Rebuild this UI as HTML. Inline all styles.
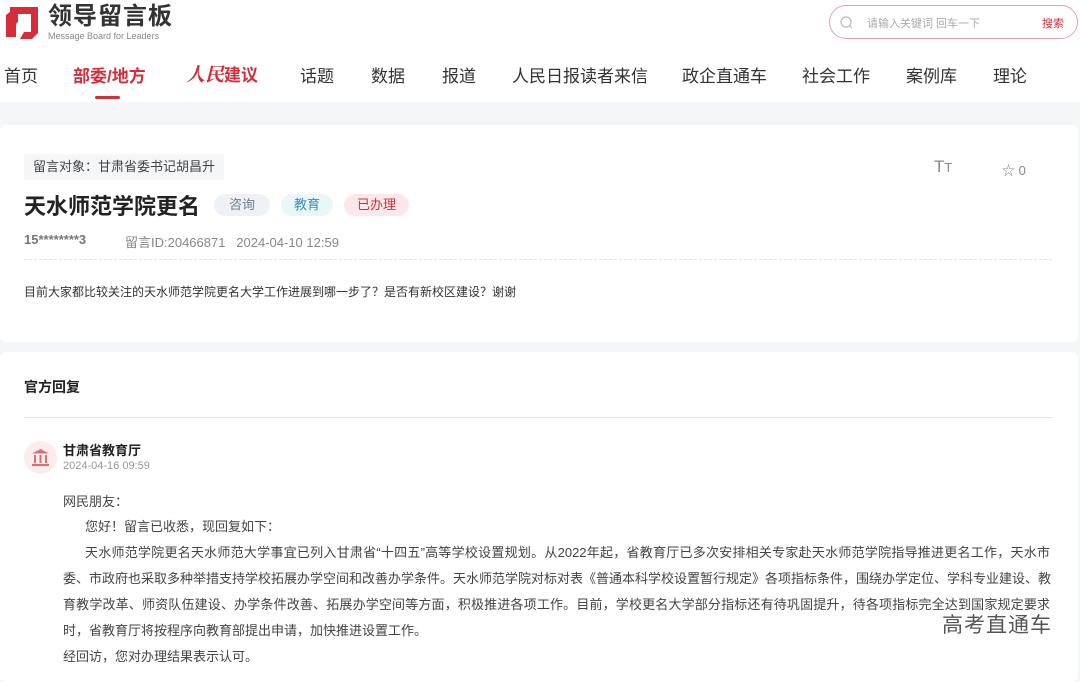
<!DOCTYPE html>
<html><head><meta charset="utf-8">
<style>
*{margin:0;padding:0;box-sizing:border-box}
body{width:1080px;height:665px;overflow:hidden;background:#f5f6f7;font-family:"Liberation Sans","Noto Sans CJK SC",sans-serif;color:#333;position:relative}
.hdr{position:absolute;left:0;top:0;width:1080px;height:102px;background:#fff}
.logo{position:absolute;left:4px;top:5px}
.search{position:absolute;left:829px;top:5px;width:249px;height:34px;border:1px solid #eaa0ad;border-radius:17px}
.nav{position:absolute;top:65px;font-size:17px;color:#333;white-space:nowrap;line-height:24px}
.abs{position:absolute;white-space:nowrap}
.card{position:absolute;background:#fff;border-radius:6px}
.tag{position:absolute;height:22px;line-height:22px;border-radius:11px;font-size:13px;text-align:center}
.ln{position:absolute;left:63px;width:987px;font-size:13px;color:#444;text-align:justify;text-align-last:justify;white-space:nowrap;line-height:20px}
</style></head><body>
<div class="hdr">
  <svg class="logo" width="36" height="36" viewBox="0 0 36 36"><path d="M6 2h28v26l-6 6H16l4-7h7V9H14v8l-8 8z" fill="#d62d3a"/><path d="M2 10l10-8v30H2z" fill="#d62d3a"/></svg>
  <div class="abs" style="left:48px;top:4px;font-size:24px;line-height:26px;font-weight:bold;color:#333;letter-spacing:1px">领导留言板</div>
  <div class="abs" style="left:48px;top:31px;font-size:9px;line-height:10px;color:#888">Message Board for Leaders</div>
  <div class="search">
    <svg style="position:absolute;left:10px;top:10px" width="13" height="13" viewBox="0 0 13 13"><circle cx="6" cy="6" r="5" fill="none" stroke="#bbb" stroke-width="1.2"/><path d="M9.5 9.5l2.5 2.5" stroke="#bbb" stroke-width="1.2"/></svg>
    <div class="abs" style="left:37px;top:9px;font-size:11px;color:#aaa">请输入关键词 回车一下</div>
    <div class="abs" style="left:212px;top:9px;font-size:11px;color:#d62d3a">搜索</div>
  </div>
  <div class="nav" style="left:4px">首页</div>
  <div class="nav" style="left:73px;color:#d62d3a;font-weight:bold">部委/地方</div>
  <div class="abs" style="left:95px;top:96px;width:25px;height:3px;background:#d62d3a;border-radius:2px"></div>
  <div class="nav" style="left:186px;top:64px;color:#d62d3a;font-weight:bold;font-size:19px;font-family:'Liberation Serif','Noto Serif CJK SC',serif;font-style:italic">人民<span style="font-style:normal;font-family:'Liberation Sans','Noto Sans CJK SC',sans-serif;font-size:17px">建议</span></div>
  <div class="nav" style="left:300px">话题</div>
  <div class="nav" style="left:371px">数据</div>
  <div class="nav" style="left:442px">报道</div>
  <div class="nav" style="left:512px">人民日报读者来信</div>
  <div class="nav" style="left:682px">政企直通车</div>
  <div class="nav" style="left:802px">社会工作</div>
  <div class="nav" style="left:906px">案例库</div>
  <div class="nav" style="left:993px">理论</div>
</div>

<div class="card" style="left:0;top:125px;width:1078px;height:217px">
  <div class="abs" style="left:24px;top:29px;height:26px;line-height:26px;padding:0 9px;background:#f5f6f7;font-size:13px;color:#444">留言对象：甘肃省委书记胡昌升</div>
  <div class="abs" style="left:934px;top:32px;font-size:17px;color:#888">T<span style="font-size:13px">T</span></div>
  <div class="abs" style="left:1002px;top:35px;font-size:13px;color:#888">☆ 0</div>
  <div class="abs" style="left:24px;top:64px;font-size:22px;font-weight:bold;color:#222">天水师范学院更名</div>
  <div class="tag" style="left:214px;top:69px;width:56px;background:#eef2f6;color:#6b7d90">咨询</div>
  <div class="tag" style="left:281px;top:69px;width:52px;background:#eaf7fa;color:#3b8bbb">教育</div>
  <div class="tag" style="left:344px;top:69px;width:65px;background:#fce8ea;color:#d62d3a">已办理</div>
  <div class="abs" style="left:24px;top:107px;font-size:13px;color:#777;font-weight:bold">15********3</div>
  <div class="abs" style="left:125px;top:107px;font-size:13px;color:#888">留言ID:20466871&nbsp;&nbsp;&nbsp;2024-04-10 12:59</div>
  <div class="abs" style="left:24px;top:134px;width:1028px;border-top:1px dashed #e5e5e5"></div>
  <div class="abs" style="left:24px;top:158px;font-size:12px;color:#333">目前大家都比较关注的天水师范学院更名大学工作进展到哪一步了？是否有新校区建设？谢谢</div>
</div>

<div class="card" style="left:0;top:352px;width:1078px;height:330px">
  <div class="abs" style="left:24px;top:25px;font-size:14px;font-weight:bold;color:#222">官方回复</div>
  <div class="abs" style="left:24px;top:65px;width:1028px;border-top:1px solid #e5e5e5"></div>
  <div class="abs" style="left:24px;top:89px;width:33px;height:33px;border-radius:50%;background:#fcecec"></div>
  <svg class="abs" style="left:31px;top:96px" width="19" height="18" viewBox="0 0 19 18"><path d="M9.5 1L1 5.5h17z" fill="#e36c70"/><rect x="1" y="16" width="17" height="2" fill="#e36c70"/><rect x="3" y="7" width="2" height="8" fill="#e36c70"/><rect x="8.5" y="7" width="2" height="8" fill="#e36c70"/><rect x="14" y="7" width="2" height="8" fill="#e36c70"/></svg>
  <div class="abs" style="left:63px;top:88px;font-size:13px;font-weight:bold;color:#222">甘肃省教育厅</div>
  <div class="abs" style="left:63px;top:108px;font-size:11px;color:#999">2024-04-16 09:59</div>
</div>
<div class="ln" style="top:492px;text-align-last:left">网民朋友：</div>
<div class="ln" style="top:517px;left:85px;text-align-last:left">您好！留言已收悉，现回复如下：</div>
<div class="ln" style="top:543px;left:85px;width:965px">天水师范学院更名天水师范大学事宜已列入甘肃省“十四五”高等学校设置规划。从2022年起，省教育厅已多次安排相关专家赴天水师范学院指导推进更名工作，天水市</div>
<div class="ln" style="top:569px">委、市政府也采取多种举措支持学校拓展办学空间和改善办学条件。天水师范学院对标对表《普通本科学校设置暂行规定》各项指标条件，围绕办学定位、学科专业建设、教</div>
<div class="ln" style="top:595px">育教学改革、师资队伍建设、办学条件改善、拓展办学空间等方面，积极推进各项工作。目前，学校更名大学部分指标还有待巩固提升，待各项指标完全达到国家规定要求</div>
<div class="ln" style="top:621px;text-align-last:left">时，省教育厅将按程序向教育部提出申请，加快推进设置工作。</div>
<div class="ln" style="top:647px;text-align-last:left">经回访，您对办理结果表示认可。</div>
<div class="abs" style="left:942px;top:609px;font-size:21px;color:#555;letter-spacing:1px;text-shadow:0 0 2px #fff">高考直通车</div>
</body></html>
